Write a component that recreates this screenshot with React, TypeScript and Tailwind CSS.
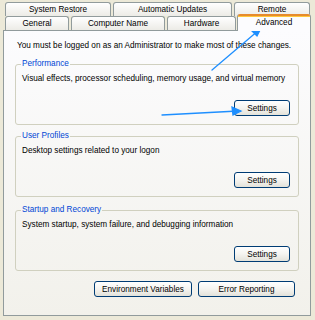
import React from 'react';

const font = "font-['Liberation_Sans',Arial,sans-serif]";

const Tab: React.FC<{ label: string; width: string; selected?: boolean }> = ({ label, width, selected }) => {
  if (selected) {
    return (
      <div
        className={`${width} relative z-10 -mb-px h-[17px] rounded-t-[3px] border-x border-[#919B9C] bg-[#FCFCFE] text-center`}
      >
        <div className="h-[2px] rounded-t-[3px] bg-[#E68B2C]" />
        <div className="h-px bg-[#FFC83C]" />
        <div className="pt-[1px] text-[8.2px] leading-[10px] text-black">{label}</div>
      </div>
    );
  }
  return (
    <div
      className={`${width} h-[14px] rounded-t-[3px] border-x border-t border-[#919B9C] bg-gradient-to-b from-white to-[#ECEBE6] text-center text-[8.2px] leading-[13px] text-black`}
    >
      {label}
    </div>
  );
};

const XpButton: React.FC<{ label: string; width: string }> = ({ label, width }) => (
  <button
    className={`${width} h-[16px] rounded-[3px] border border-[#003C74] bg-gradient-to-b from-white via-[#F5F4F0] to-[#E3E2DA] text-center text-[8.2px] leading-[13px] text-black`}
  >
    {label}
  </button>
);

const Group: React.FC<{ title: string; text: string; className?: string }> = ({ title, text, className }) => (
  <fieldset
    className={`mx-[11px] rounded-[3px] border border-[#D0D0BF] pl-[6px] pr-[8px] pb-[8px] ${className ?? ''}`}
  >
    <legend className="ml-[-1px] px-[1px] text-[8.2px] leading-[10px] text-[#0046D5]">{title}</legend>
    <p className="mt-[4px] whitespace-nowrap text-[8.2px] leading-[11px] text-black">{text}</p>
    <div className="mt-[16px] flex justify-end">
      <XpButton label="Settings" width="w-[56px]" />
    </div>
  </fieldset>
);

export default function App() {
  return (
    <div className={`${font} relative h-[320px] w-[315px] overflow-hidden bg-[#ECE9D8]`}>
      <div className="pt-[2px]">
        {/* back row */}
        <div className="ml-[5px] flex gap-[2px]">
          <Tab label="System Restore" width="w-[106px]" />
          <Tab label="Automatic Updates" width="w-[119px]" />
          <Tab label="Remote" width="w-[76px]" />
        </div>
        {/* front row */}
        <div className="ml-[5px] flex h-[14px] items-end gap-[2px]">
          <Tab label="General" width="w-[64px]" />
          <Tab label="Computer Name" width="w-[94px]" />
          <Tab label="Hardware" width="w-[69px]" />
          <div className="-ml-px">
            <Tab label="Advanced" width="w-[74px]" selected />
          </div>
        </div>
      </div>

      <div className="mx-[3px] h-[286px] w-[308px] border border-[#919B9C] bg-gradient-to-b from-[#FCFCFE] to-[#F2F1EB]">
        <p className="whitespace-nowrap pl-[13px] pt-[9px] text-[8.2px] leading-[11px] text-black">
          You must be logged on as an Administrator to make most of these changes.
        </p>
        <Group
          className="mt-[8px]"
          title="Performance"
          text="Visual effects, processor scheduling, memory usage, and virtual memory"
        />
        <Group className="mt-[6px] pb-[7px]" title="User Profiles" text="Desktop settings related to your logon" />
        <Group
          className="mt-[8px]"
          title="Startup and Recovery"
          text="System startup, system failure, and debugging information"
        />
        <div className="mt-[10px] mr-[15px] flex justify-end gap-[6px]">
          <XpButton label="Environment Variables" width="w-[98px]" />
          <XpButton label="Error Reporting" width="w-[97px]" />
        </div>
      </div>

      {/* annotation arrows */}
      <svg className="pointer-events-none absolute left-0 top-0" width="315" height="320" viewBox="0 0 315 320">
        <g stroke="#1E8FFF" strokeWidth="1.3" fill="#1E8FFF" strokeLinecap="round">
          <line x1="212" y1="70" x2="259" y2="30" />
          <path d="M261 28 L252 31 L257 36 Z" />
          <line x1="162" y1="115" x2="238" y2="111" />
          <path d="M241 111 L232 107 L233 115 Z" />
        </g>
      </svg>
    </div>
  );
}
